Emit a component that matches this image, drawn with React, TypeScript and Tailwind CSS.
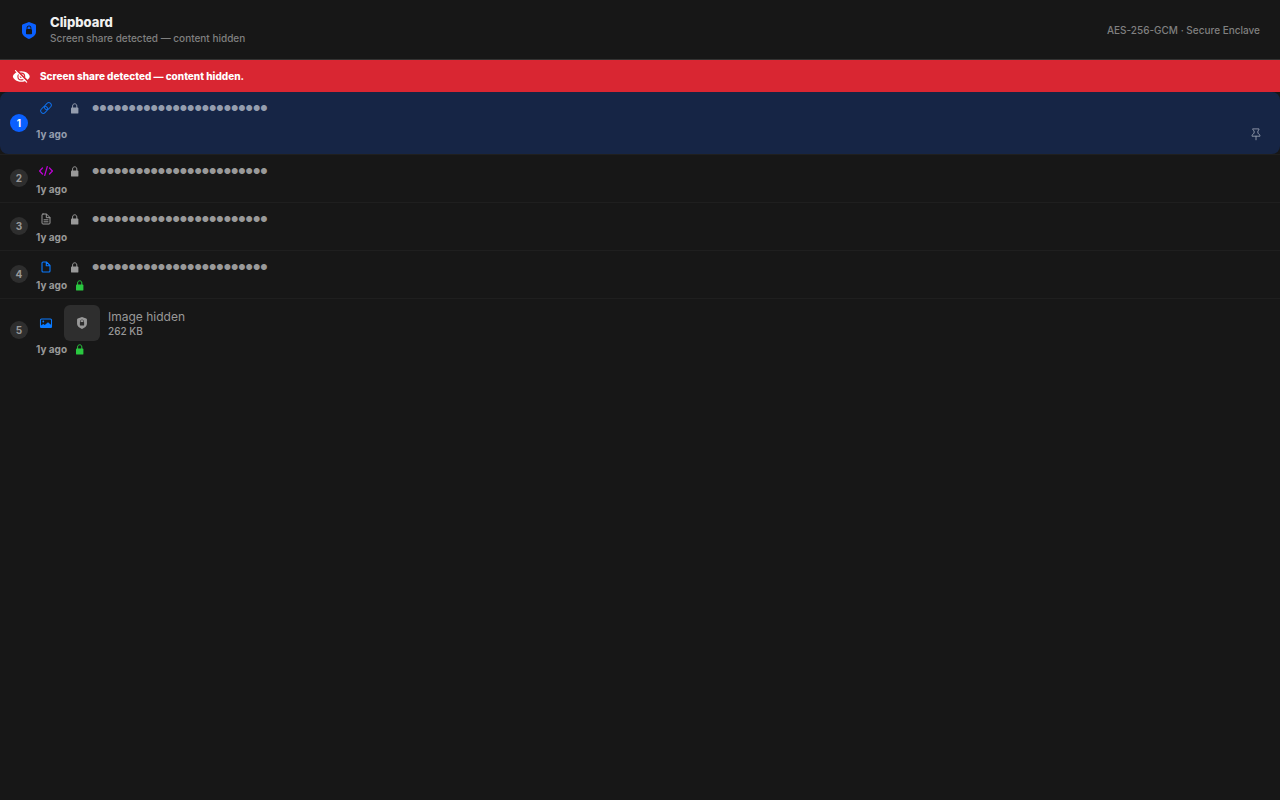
import type { ReactNode } from "react";

type Kind = "link" | "code" | "text" | "file" | "image";

type Clip = {
  id: number;
  kind: Kind;
  age: string;
  size?: string;
  encrypted?: boolean;
};

const clips: Clip[] = [
  { id: 1, kind: "link", age: "1y ago" },
  { id: 2, kind: "code", age: "1y ago" },
  { id: 3, kind: "text", age: "1y ago" },
  { id: 4, kind: "file", age: "1y ago", encrypted: true },
  { id: 5, kind: "image", age: "1y ago", size: "262 KB", encrypted: true },
];

const MASK = "●".repeat(24);

function ShieldIcon({ className }: { className: string }) {
  return (
    <svg viewBox="0 0 14 17" className={className} aria-hidden="true">
      <path
        fill="currentColor"
        fillRule="evenodd"
        d="M7 0 13 2.2Q14 2.6 14 3.6V10C14 13.4 10.5 15.4 7 17 3.5 15.4 0 13.4 0 10V3.6Q0 2.6 1 2.2ZM4.6 7.2Q4 7.4 4 8V11.4Q4 12.2 4.8 12.2H9.2Q10 12.2 10 11.4V8Q10 7.4 9.4 7.2V6C9.4 4.5 8.4 3.5 7 3.5S4.6 4.5 4.6 6ZM5.5 7.1V6C5.5 5 6.1 4.4 7 4.4S8.5 5 8.5 6V7.1Z"
      />
    </svg>
  );
}

function LockIcon({ className = "" }: { className?: string }) {
  return (
    <svg viewBox="-1 0 9 11" className={`h-[11px] w-[9px] ${className}`} aria-hidden="true">
      <rect y="4.6" width="7.4" height="6" rx="0.9" fill="currentColor" />
      <path d="M1.6 5V3.1C1.6 1.6 2.5.8 3.7.8s2.1.8 2.1 2.3V5" fill="none" stroke="currentColor" />
    </svg>
  );
}

function EyeOffIcon() {
  return (
    <svg viewBox="0 0 18 13" className="h-[13px] w-[18px]" aria-hidden="true">
      <path fill="currentColor" d="M9.3 1.2c4.8 0 8.4 3.2 8.4 5.3s-3.6 5.3-8.4 5.3S.9 8.600.9 6.500 4.500 1.200 9.300 1.200Z" />
      <circle cx="9.3" cy="6.5" r="3.4" fill="none" stroke="#d92632" strokeWidth="1.1" />
      <circle cx="9.3" cy="6.5" r="1.5" fill="#d92632" />
      <path d="M4.4 0 16 11.800" stroke="#d92632" strokeWidth="2" />
      <path d="M3.5.7 14.700 12.100" stroke="currentColor" strokeWidth="1.1" strokeLinecap="round" />
    </svg>
  );
}

function PinIcon() {
  return (
    <svg
      viewBox="0 0 10 13"
      className="h-[13px] w-[10px]"
      fill="none"
      stroke="currentColor"
      strokeWidth="0.9"
      strokeLinecap="round"
      strokeLinejoin="round"
      aria-hidden="true"
    >
      <path d="M2 .9H8V1.8L6.900 2.800V5.300C8.200 5.900 9 6.900 9 8.200H1C1 6.900 1.800 5.900 3.100 5.300V2.800L2 1.800ZM5 8.200V11.800" />
    </svg>
  );
}

const kindIcons: Record<Kind, { color: string; art: ReactNode }> = {
  link: {
    color: "text-[#0f6fe8]",
    art: (
      <g transform="rotate(-45 7 7)">
        <rect x="0.6" y="4.5" width="7.6" height="5" rx="2.5" />
        <rect x="5.800" y="4.5" width="7.6" height="5" rx="2.5" />
      </g>
    ),
  },
  code: {
    color: "text-[#bf00d8]",
    art: <path d="M3.5 4 .6 7 3.5 10M10.5 4 13.4 7 10.5 10M8.3 2.5 5.7 11.5" strokeWidth="1.2" />,
  },
  text: {
    color: "text-[#999999]",
    art: <path d="M4 2H7.5L11 5.5V11Q11 12 10 12H4Q3 12 3 11V3Q3 2 4 2ZM7.3 2.2V5.7H10.8M5 7.8H9M5 9.800H9" />,
  },
  file: {
    color: "text-[#0a7aff]",
    art: <path d="M4 2H7.5L11 5.5V11Q11 12 10 12H4Q3 12 3 11V3Q3 2 4 2ZM7.3 2.2V5.7H10.8" strokeWidth="1.1" />,
  },
  image: {
    color: "text-[#0a7aff]",
    art: (
      <>
        <rect x="1.5" y="3" width="11" height="8.5" rx="1" strokeWidth="1.1" />
        <circle cx="4.3" cy="5.5" r="0.9" fill="currentColor" stroke="none" />
        <path d="M1.5 9.8 4.3 7.9 5.8 9 9 6.2 12.5 9.3V11.5H1.5Z" fill="currentColor" stroke="none" />
      </>
    ),
  },
};

function ClipRow({ clip, selected }: { clip: Clip; selected: boolean }) {
  const icon = kindIcons[clip.kind];

  return (
    <li className="border-b border-[#1f1f1f] last:border-b-0">
      <div
        className={`flex items-center gap-2 px-2.5 ${
          selected ? "rounded-lg bg-[#162545] py-1.5 text-[#949dae]" : "pt-1.5 pb-[7px] text-[#999999]"
        }`}
      >
        <span
          className={`flex size-[18px] shrink-0 items-center justify-center rounded-full text-[10px] font-bold ${
            selected ? "bg-[#0a60ff] text-white" : "bg-[#2e2e2e]"
          }`}
        >
          {clip.id}
        </span>

        <div className="flex min-w-0 flex-1 flex-col gap-0.5">
          <div className="flex items-center gap-2">
            <span className={`flex w-5 justify-center ${icon.color}`}>
              <svg
                viewBox="0 0 14 14"
                className="size-3.5"
                fill="none"
                stroke="currentColor"
                strokeLinecap="round"
                strokeLinejoin="round"
                aria-hidden="true"
              >
                {icon.art}
              </svg>
            </span>
            {clip.kind === "image" ? (
              <>
                <span className="flex size-9 items-center justify-center rounded-md bg-[#2e2e2e]">
                  <ShieldIcon className="h-3 w-2.5" />
                </span>
                <span className="flex flex-col">
                  <span className="text-xs leading-4">Image hidden</span>
                  <span className="text-[10px] leading-3 font-medium">{clip.size}</span>
                </span>
              </>
            ) : (
              <>
                <span className="flex w-5 justify-center">
                  <LockIcon />
                </span>
                <span className="text-[8px] leading-5">{MASK}</span>
              </>
            )}
          </div>

          <div className="flex items-center gap-2">
            <span className="text-[10px] leading-3 font-bold">{clip.age}</span>
            {clip.encrypted && <LockIcon className="text-[#2ac840]" />}
            {selected && (
              <button type="button" aria-label="Pin" className="ml-auto flex size-7 items-center justify-center">
                <PinIcon />
              </button>
            )}
          </div>
        </div>
      </div>
    </li>
  );
}

export default function App() {
  return (
    <div className="min-h-screen bg-[#171717] font-['Inter',sans-serif]">
      <header className="flex items-center justify-between border-b border-[#333333] px-5 pt-3.5 pb-[13px]">
        <div className="flex items-center gap-3">
          <span className="flex w-[18px] justify-center text-[#0a60ff]">
            <ShieldIcon className="h-[17px] w-3.5" />
          </span>
          <div>
            <h1 className="text-[13px] leading-4 font-extrabold text-[#f0f0f0]">Clipboard</h1>
            <p className="text-[10px] leading-4 font-medium text-[#808080]">Screen share detected — content hidden</p>
          </div>
        </div>
        <p className="text-[10px] leading-4 font-medium text-[#808080]">AES-256-GCM · Secure Enclave</p>
      </header>

      <div role="alert" className="flex h-8 items-center gap-2.5 bg-[#d92632] px-3 text-white">
        <EyeOffIcon />
        <p className="text-[10px] font-extrabold">Screen share detected — content hidden.</p>
      </div>

      <ul>
        {clips.map((clip) => (
          <ClipRow key={clip.id} clip={clip} selected={clip.id === 1} />
        ))}
      </ul>
    </div>
  );
}
